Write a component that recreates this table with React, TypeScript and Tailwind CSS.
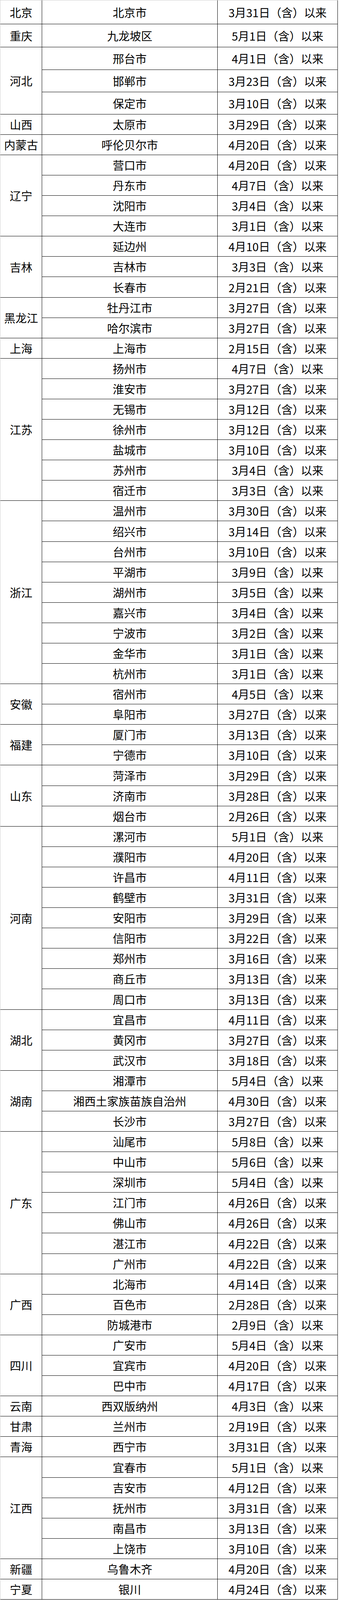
const groups: [string, [string, string][]][] = [
  ["北京", [["北京市", "3月31日"]]],
  ["重庆", [["九龙坡区", "5月1日"]]],
  ["河北", [["邢台市", "4月1日"], ["邯郸市", "3月23日"], ["保定市", "3月10日"]]],
  ["山西", [["太原市", "3月29日"]]],
  ["内蒙古", [["呼伦贝尔市", "4月20日"]]],
  ["辽宁", [["营口市", "4月20日"], ["丹东市", "4月7日"], ["沈阳市", "3月4日"], ["大连市", "3月1日"]]],
  ["吉林", [["延边州", "4月10日"], ["吉林市", "3月3日"], ["长春市", "2月21日"]]],
  ["黑龙江", [["牡丹江市", "3月27日"], ["哈尔滨市", "3月27日"]]],
  ["上海", [["上海市", "2月15日"]]],
  [
    "江苏",
    [
      ["扬州市", "4月7日"],
      ["淮安市", "3月27日"],
      ["无锡市", "3月12日"],
      ["徐州市", "3月12日"],
      ["盐城市", "3月10日"],
      ["苏州市", "3月4日"],
      ["宿迁市", "3月3日"],
    ],
  ],
  [
    "浙江",
    [
      ["温州市", "3月30日"],
      ["绍兴市", "3月14日"],
      ["台州市", "3月10日"],
      ["平湖市", "3月9日"],
      ["湖州市", "3月5日"],
      ["嘉兴市", "3月4日"],
      ["宁波市", "3月2日"],
      ["金华市", "3月1日"],
      ["杭州市", "3月1日"],
    ],
  ],
  ["安徽", [["宿州市", "4月5日"], ["阜阳市", "3月27日"]]],
  ["福建", [["厦门市", "3月13日"], ["宁德市", "3月10日"]]],
  ["山东", [["菏泽市", "3月29日"], ["济南市", "3月28日"], ["烟台市", "2月26日"]]],
  [
    "河南",
    [
      ["漯河市", "5月1日"],
      ["濮阳市", "4月20日"],
      ["许昌市", "4月11日"],
      ["鹤壁市", "3月31日"],
      ["安阳市", "3月29日"],
      ["信阳市", "3月22日"],
      ["郑州市", "3月16日"],
      ["商丘市", "3月13日"],
      ["周口市", "3月13日"],
    ],
  ],
  ["湖北", [["宜昌市", "4月11日"], ["黄冈市", "3月27日"], ["武汉市", "3月18日"]]],
  ["湖南", [["湘潭市", "5月4日"], ["湘西土家族苗族自治州", "4月30日"], ["长沙市", "3月27日"]]],
  [
    "广东",
    [
      ["汕尾市", "5月8日"],
      ["中山市", "5月6日"],
      ["深圳市", "5月4日"],
      ["江门市", "4月26日"],
      ["佛山市", "4月26日"],
      ["湛江市", "4月22日"],
      ["广州市", "4月22日"],
    ],
  ],
  ["广西", [["北海市", "4月14日"], ["百色市", "2月28日"], ["防城港市", "2月9日"]]],
  ["四川", [["广安市", "5月4日"], ["宜宾市", "4月20日"], ["巴中市", "4月17日"]]],
  ["云南", [["西双版纳州", "4月3日"]]],
  ["甘肃", [["兰州市", "2月19日"]]],
  ["青海", [["西宁市", "3月31日"]]],
  [
    "江西",
    [
      ["宜春市", "5月1日"],
      ["吉安市", "4月12日"],
      ["抚州市", "3月31日"],
      ["南昌市", "3月13日"],
      ["上饶市", "3月10日"],
    ],
  ],
  ["新疆", [["乌鲁木齐", "4月20日"]]],
  ["宁夏", [["银川", "4月24日"]]],
];

// where each row's bottom line sits in the 4170px tall original
const topLines = [62, 122, 181, 239, 297];
const refLine = (i: number) => (i < 5 ? topLines[i] : 297 + ((i - 4) * 3871) / 73);

export default function App() {
  // the window can be shorter than the original; squeeze rows to fit it
  const scale = typeof window !== "undefined" ? Math.min(1, window.innerHeight / 4170) : 1;
  const line = (i: number) => (i < 0 ? 0 : Math.round(refLine(i) * scale));

  let rowIndex = 0;

  return (
    <div
      className="w-[869px] bg-white text-black text-[29px] leading-none"
      style={{ fontFamily: '"Noto Sans CJK SC", "Noto Sans", sans-serif' }}
    >
      <div className="w-max border-l border-t border-[#cfcfcf]">
        {groups.map(([province, cities]) => (
          <div key={province} className="flex">
            <div className="w-[107px] shrink-0 border-r border-b border-black flex items-center justify-center">
              {province}
            </div>
            <div className="flex flex-col">
              {cities.map(([city, date]) => {
                const i = rowIndex++;
                const height = line(i) - line(i - 1);
                return (
                  <div key={city} className="flex shrink-0 border-b border-black" style={{ height }}>
                    <div className="w-[450px] shrink-0 border-r border-black flex items-center justify-center">
                      {city}
                    </div>
                    <div className="w-[308px] shrink-0 border-r border-black flex items-center justify-center">
                      {date}（含）以来
                    </div>
                  </div>
                );
              })}
            </div>
          </div>
        ))}
      </div>
    </div>
  );
}
